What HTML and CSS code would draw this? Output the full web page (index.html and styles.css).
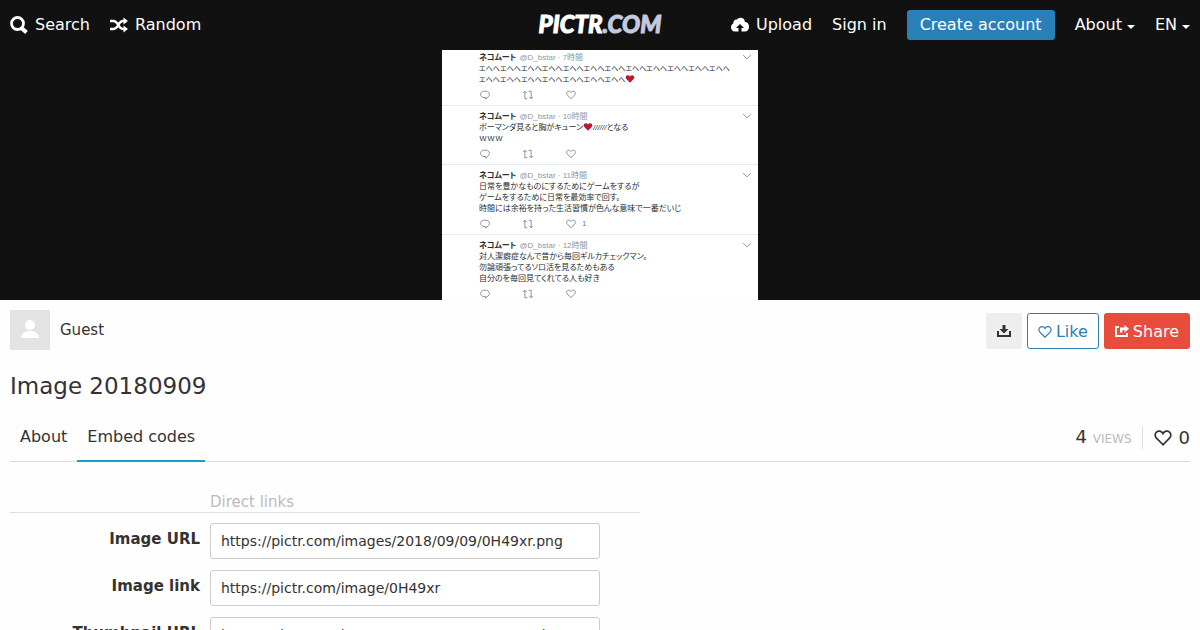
FILE: index.html
```html
<!doctype html>
<html lang="en">
<head>
    <meta charset="UTF-8">
    <meta name="viewport" content="width=device-width, initial-scale=1.0">
    <title>Image 20180909 - PICTR.COM</title>
    <link rel="stylesheet" href="styles.css">
</head>
<body>
    <svg class="sprite" aria-hidden="true">
        <symbol id="heart" viewBox="0 0 16 16">
            <path d="M8 14 L2.2 8.1 C0.6 6.4 0.7 4 2.2 2.7 C4 1.2 6.7 1.7 8 4 C9.3 1.7 12 1.2 13.8 2.7 C15.3 4 15.4 6.4 13.8 8.1 Z"/>
        </symbol>
        <symbol id="reply" viewBox="0 0 16 16">
            <path d="M6 2 H10 C13 2 15 4.5 15 7 C15 10 12 12 9 14.5 V12 H6 C3 12 1 10 1 7 C1 4.5 3 2 6 2 Z"/>
        </symbol>
        <symbol id="retweet" viewBox="0 0 16 16">
            <path d="M0 5 L3 2 L6 5 M3 2 V14 H7 M9 2 H13 V14 M10 11 L13 14 L16 11"/>
        </symbol>
        <symbol id="chevron" viewBox="0 0 16 16">
            <path d="M2 5 L8 11 L14 5"/>
        </symbol>
    </svg>

    <header class="top-bar">
        <nav class="top-nav">
            <a href="#search">
                <svg class="icon" viewBox="0 0 18 18"><circle cx="7.5" cy="7.5" r="6" fill="none" stroke="currentColor" stroke-width="2.8"/><path d="M11.5 12 L16.5 16.5" stroke="currentColor" stroke-width="4"/></svg>
                Search
            </a>
            <a href="#random">
                <svg class="icon" viewBox="0 0 18 18"><path d="M0 5 H3.5 C8.5 5 8 13 13 13 H14.5 M0 13 H3.5 C8.5 13 8 5 13 5 H14.5" fill="none" stroke="currentColor" stroke-width="2.4"/><path d="M13.5 1.5 L18 5 L13.5 8.5 Z M13.5 9.5 L18 13 L13.5 16.5 Z" fill="currentColor"/></svg>
                Random
            </a>
        </nav>
        <a class="logo" href="#home">PICTR<span>.COM</span></a>
        <nav class="top-nav top-nav-right">
            <a href="#upload">
                <svg class="icon" viewBox="0 0 18 18"><path fill="currentColor" d="M4 15.5 C1.5 15.5 0 13.7 0 11.5 C0 9.5 1 8.2 2.3 7.6 C2 5 4 3.2 6 3.7 C7 2.2 8.5 1.5 10 1.8 C12.5 2 14 3.8 13.9 6 C16.5 6 18 8 18 10.7 C18 13.5 16.3 15.5 14 15.5 H10.5 V12 H13 L9 8 L5 12 H7.5 V15.5 Z"/></svg>
                Upload
            </a>
            <a href="#signin">Sign in</a>
            <a class="create" href="#signup">Create account</a>
            <a class="dropdown" href="#about-menu">About</a>
            <a class="dropdown" href="#language">EN</a>
        </nav>
    </header>

    <div class="viewer">
        <div class="picture" lang="ja">
            <article class="tweet">
                <p class="tweet-head"><b>ネコムート</b> <span>@D_bstar · 7時間</span><svg class="tweet-icon"><use href="#chevron"/></svg></p>
                <p class="long-line">エヘヘエヘヘエヘヘエヘヘエヘヘエヘヘエヘヘエヘヘエヘヘエヘヘエヘヘエヘヘ<br>エヘヘエヘヘエヘヘエヘヘエヘヘエヘヘエヘヘ<svg class="red-heart"><use href="#heart"/></svg></p>
                <div class="tweet-actions">
                    <span><svg class="tweet-icon"><use href="#reply"/></svg></span>
                    <span><svg class="tweet-icon"><use href="#retweet"/></svg></span>
                    <span><svg class="tweet-icon"><use href="#heart"/></svg></span>
                </div>
            </article>
            <article class="tweet">
                <p class="tweet-head"><b>ネコムート</b> <span>@D_bstar · 10時間</span><svg class="tweet-icon"><use href="#chevron"/></svg></p>
                <p>ボーマンダ見ると胸がキューン<svg class="red-heart"><use href="#heart"/></svg><i>//////</i>となる<br>ｗｗｗ</p>
                <div class="tweet-actions">
                    <span><svg class="tweet-icon"><use href="#reply"/></svg></span>
                    <span><svg class="tweet-icon"><use href="#retweet"/></svg></span>
                    <span><svg class="tweet-icon"><use href="#heart"/></svg></span>
                </div>
            </article>
            <article class="tweet">
                <p class="tweet-head"><b>ネコムート</b> <span>@D_bstar · 11時間</span><svg class="tweet-icon"><use href="#chevron"/></svg></p>
                <p>日常を豊かなものにするためにゲームをするが<br>ゲームをするために日常を最効率で回す。<br>時間には余裕を持った生活習慣が色んな意味で一番だいじ</p>
                <div class="tweet-actions">
                    <span><svg class="tweet-icon"><use href="#reply"/></svg></span>
                    <span><svg class="tweet-icon"><use href="#retweet"/></svg></span>
                    <span><svg class="tweet-icon"><use href="#heart"/></svg>1</span>
                </div>
            </article>
            <article class="tweet">
                <p class="tweet-head"><b>ネコムート</b> <span>@D_bstar · 12時間</span><svg class="tweet-icon"><use href="#chevron"/></svg></p>
                <p>対人潔癖症なんで昔から毎回ギルカチェックマン。<br>勿論頑張ってるソロ活を見るためもある<br>自分のを毎回見てくれてる人も好き</p>
                <div class="tweet-actions">
                    <span><svg class="tweet-icon"><use href="#reply"/></svg></span>
                    <span><svg class="tweet-icon"><use href="#retweet"/></svg></span>
                    <span><svg class="tweet-icon"><use href="#heart"/></svg></span>
                </div>
            </article>
        </div>
    </div>

    <main class="content">
        <div class="owner-row">
            <a class="owner" href="#guest">
                <svg class="avatar" viewBox="0 0 40 40"><circle cx="20" cy="15" r="5"/><path d="M11 28 C12 23 15 21 20 21 C25 21 28 23 29 28 Z"/></svg>
                Guest
            </a>
            <div class="actions">
                <button class="btn btn-download" type="button" aria-label="Download">
                    <svg class="btn-icon" viewBox="0 0 14 14"><path d="M5.5 0 H8.5 V4 H11.5 L7 8.5 L2.5 4 H5.5 Z M0 6 H2 V10 H12 V6 H14 V12 H0 Z"/></svg>
                </button>
                <button class="btn btn-like" type="button">
                    <svg class="btn-icon outline"><use href="#heart"/></svg>Like
                </button>
                <button class="btn btn-share" type="button">
                    <svg class="btn-icon" viewBox="0 0 14 14"><path d="M0 1 H4 V3 H2 V10 H11 V8 H13 V12 H0 Z M9.500 0 L14 3.800 L9.500 7.500 V5 H7.500 V7.500 H5 V2.500 H9.500 Z"/></svg>Share
                </button>
            </div>
        </div>

        <h1>Image 20180909</h1>

        <div class="tab-row">
            <nav class="tabs">
                <a href="#about">About</a>
                <a class="current" href="#embeds">Embed codes</a>
            </nav>
            <div class="stats">
                <span class="views">4 <small>VIEWS</small></span>
                <span class="likes"><svg class="stat-icon"><use href="#heart"/></svg>0</span>
            </div>
        </div>

        <form class="embeds">
            <h2>Direct links</h2>
            <div class="field">
                <label for="image-url">Image URL</label>
                <input id="image-url" type="text" value="https://pictr.com/images/2018/09/09/0H49xr.png" readonly>
            </div>
            <div class="field">
                <label for="image-link">Image link</label>
                <input id="image-link" type="text" value="https://pictr.com/image/0H49xr" readonly>
            </div>
            <div class="field">
                <label for="thumb-url">Thumbnail URL</label>
                <input id="thumb-url" type="text" value="https://pictr.com/images/2018/09/09/0H49xr.th.png" readonly>
            </div>
        </form>
    </main>
</body>
</html>
```
FILE: styles.css
```css
* {
    box-sizing: border-box;
}

body {
    margin: 0;
    background: #fefefe;
    color: #333;
    font: 16px/20px "DejaVu Sans", sans-serif;
}

a {
    color: inherit;
    text-decoration: none;
}

h1, h2, p {
    margin: 0;
    font-weight: normal;
}

.sprite {
    display: none;
}

/* top bar */
.top-bar {
    display: flex;
    align-items: center;
    height: 50px;
    padding: 0 10px;
    background: #111;
    color: #fff;
}

.top-nav {
    display: flex;
    flex: 1;
    align-items: center;
    gap: 20px;
    white-space: nowrap;
}

.top-nav-right {
    justify-content: flex-end;
}

.top-nav a {
    display: flex;
    align-items: center;
}

.icon {
    width: 18px;
    height: 18px;
    margin-right: 7px;
}

.logo {
    padding-bottom: 2px;
    font: italic 900 24px/30px Lato, sans-serif;
    -webkit-text-stroke: 1px currentColor;
}

.logo span {
    color: #c5c8df;
}

.top-nav .create {
    height: 30px;
    padding: 0 13px;
    border-radius: 3px;
    background: #2980b9;
}

.dropdown::after {
    content: "";
    margin: 3px 0 0 5px;
    border: 4px solid transparent;
    border-top-color: #fff;
    border-bottom: 0;
}

/* image viewer */
.viewer {
    display: flex;
    justify-content: center;
    background: #111;
}

.picture {
    width: 316px;
    background: #fff;
    color: #292f33;
    font: 8px/11px "Liberation Sans", "Noto Sans CJK JP", sans-serif;
    font-feature-settings: "palt";
    white-space: nowrap;
}

.tweet {
    padding: 5px 6px 5px 37px;
    border-top: 1px solid #e6ecf0;
}

.tweet:first-child {
    padding-top: 2px;
    border-top: 0;
}

.tweet:last-child {
    padding-bottom: 1px;
}

.tweet .long-line {
    font-size: 7px;
}

.tweet-head {
    display: flex;
    gap: 3px;
    height: 11px;
}

.tweet-head span {
    flex: 1;
    color: #8899a6;
}

.tweet-icon {
    width: 10px;
    height: 10px;
    fill: none;
    stroke: #77848f;
    stroke-width: 1.4;
}

.red-heart {
    width: 10px;
    height: 10px;
    fill: #be1931;
    vertical-align: -2px;
}

.tweet-actions {
    display: flex;
    height: 11px;
    margin-top: 4px;
    padding-left: 1px;
    color: #77848f;
}

.tweet-actions span {
    display: flex;
    align-items: center;
    gap: 6px;
    width: 43px;
}

/* image details */
.content {
    padding: 10px;
}

.owner-row,
.owner,
.actions,
.tab-row,
.tabs,
.stats {
    display: flex;
    align-items: center;
}

.owner-row,
.tab-row {
    justify-content: space-between;
}

.owner {
    gap: 10px;
    font-size: 15px;
}

.avatar {
    width: 40px;
    height: 40px;
    background: #e3e3e3;
    fill: #fff;
}

.actions {
    gap: 5px;
    padding-top: 2px;
}

.btn {
    display: flex;
    align-items: center;
    gap: 4px;
    height: 36px;
    padding: 1px 10px 0;
    border: 1px solid transparent;
    border-radius: 3px;
    font: inherit;
}

.btn-icon {
    width: 14px;
    height: 14px;
    fill: currentColor;
}

.btn-icon.outline {
    fill: none;
    stroke: currentColor;
    stroke-width: 1.4;
}

.btn-download {
    background: #eee;
    color: #333;
}

.btn-like {
    border-color: #2980b9;
    background: #fff;
    color: #2980b9;
}

.btn-share {
    background: #e74c3c;
    color: #fff;
}

h1 {
    margin: 20px 0;
    font-size: 23px;
    line-height: 32px;
}

.tab-row {
    height: 50px;
    margin-top: -10px;
    border-bottom: 1px solid #ddd;
}

.tabs a {
    height: 50px;
    padding: 15px 10px 0;
}

.tabs .current {
    border-bottom: 2px solid #1b9dc9;
}

.stats {
    padding-top: 2px;
    font-size: 18px;
}

.views {
    padding-right: 10px;
    border-right: 1px solid #ddd;
}

.views small {
    color: #bbb;
    font-size: 12px;
}

.likes {
    display: flex;
    align-items: center;
    gap: 7px;
    padding-left: 11px;
}

.stat-icon {
    width: 18px;
    height: 18px;
    fill: none;
    stroke: currentColor;
    stroke-width: 1.5;
}

.embeds {
    max-width: 630px;
    margin-top: 30px;
}

.embeds h2 {
    margin-bottom: 10px;
    padding-left: 200px;
    border-bottom: 1px solid #ddd;
    color: #bbb;
    font-size: 15px;
}

.field {
    display: flex;
    gap: 10px;
    margin-bottom: 11px;
}

.field label {
    width: 190px;
    padding-top: 6px;
    font-size: 15px;
    font-weight: bold;
    text-align: right;
}

.field input {
    width: 390px;
    height: 36px;
    padding: 0 10px;
    border: 1px solid #ccc;
    border-radius: 3px;
    background: #fff;
    color: #333;
    font: 14px "DejaVu Sans", sans-serif;
}
```
